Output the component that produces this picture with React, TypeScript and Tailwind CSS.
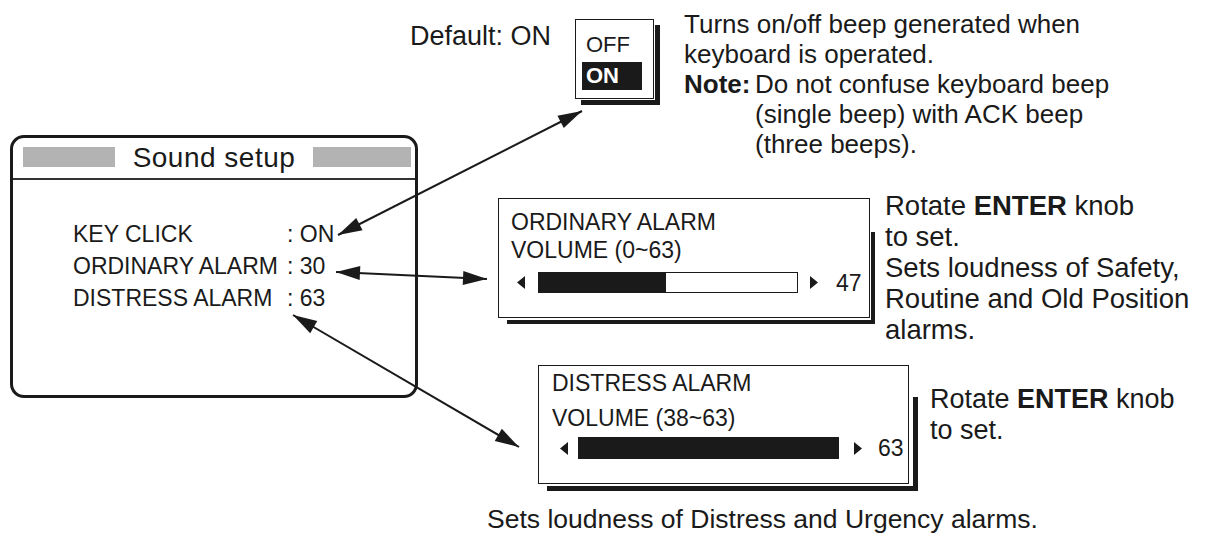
import React from 'react';

type Pt = [number, number];

const INK = '#1a1a1a';

// arrowhead polygon with its tip on `tip`, pointing away from `from`
const headPoints = (tip: Pt, from: Pt) => {
  const dx = from[0] - tip[0];
  const dy = from[1] - tip[1];
  const len = Math.hypot(dx, dy);
  const ux = dx / len;
  const uy = dy / len;
  const L = 24;
  const W = 7;
  const bx = tip[0] + ux * L;
  const by = tip[1] + uy * L;
  return `${tip[0]},${tip[1]} ${bx - uy * W},${by + ux * W} ${bx + uy * W},${by - ux * W}`;
};

const Arrow = ({ a, b }: { a: Pt; b: Pt }) => (
  <g>
    <line x1={a[0]} y1={a[1]} x2={b[0]} y2={b[1]} stroke={INK} strokeWidth={2} />
    <polygon points={headPoints(a, b)} fill={INK} />
    <polygon points={headPoints(b, a)} fill={INK} />
  </g>
);

const TriLeft = () => (
  <svg width="8" height="13" viewBox="0 0 8 13" className="shrink-0">
    <polygon points="8,0 8,13 0,6.5" fill={INK} />
  </svg>
);

const TriRight = () => (
  <svg width="8" height="13" viewBox="0 0 8 13" className="shrink-0">
    <polygon points="0,0 0,13 8,6.5" fill={INK} />
  </svg>
);

const Bold = ({ children }: { children: React.ReactNode }) => <span className="font-bold">{children}</span>;

const App: React.FC = () => {
  return (
    <div className="relative h-[536px] w-[1205px] overflow-hidden bg-white text-[#1a1a1a] font-['Liberation_Sans',Arial,sans-serif]">
      {/* screen: Sound setup */}
      <div className="absolute left-[10px] top-[135px] h-[263px] w-[408px] rounded-[14px] border-[3px] border-[#1a1a1a]">
        <div className="flex h-[42px] items-start border-b-2 border-[#333] pl-[10px] pr-[4px] pt-[9px]">
          <div className="h-[20px] w-[92px] bg-[#b3b3b3]" />
          <div className="flex-1 text-center text-[28px] leading-[22px] tracking-[0.5px]">Sound setup</div>
          <div className="h-[20px] w-[98px] bg-[#b3b3b3]" />
        </div>
        <div className="grid grid-cols-[214px_auto] pl-[60px] pt-[38px] text-[23px] leading-[32px]">
          <span>KEY CLICK</span>
          <span>: ON</span>
          <span>ORDINARY ALARM</span>
          <span>: 30</span>
          <span>DISTRESS ALARM</span>
          <span>: 63</span>
        </div>
      </div>

      {/* OFF / ON option window */}
      <div className="absolute left-[410px] top-[21px] text-[27px] leading-[30px]">Default: ON</div>
      <div className="absolute left-[575px] top-[19px] h-[80px] w-[79px] border border-[#1a1a1a] bg-white pl-[6px] pt-[13px] shadow-[1px_1px_0_0_#fff,6px_6px_0_0_#1a1a1a]">
        <div className="ml-[4px] text-[22px] leading-[24px]">OFF</div>
        <div className="mt-[5px] h-[28px] w-[60px] bg-[#1a1a1a] pl-[4px] text-[22px] font-bold leading-[28px] text-white">ON</div>
      </div>

      <div className="absolute left-[684px] top-[9px] whitespace-nowrap text-[26px] leading-[30px]">
        <div>Turns on/off beep generated when</div>
        <div>keyboard is operated.</div>
        <div className="flex">
          <span className="w-[71px] shrink-0 font-bold">Note:</span>
          <div>
            <div>Do not confuse keyboard beep</div>
            <div>(single beep) with ACK beep</div>
            <div>(three beeps).</div>
          </div>
        </div>
      </div>

      {/* ORDINARY ALARM volume window */}
      <div className="absolute left-[498px] top-[198px] h-[120px] w-[372px] border border-[#1a1a1a] pl-[12px] pt-[9px] text-[23px] leading-[28px]">
        <div>ORDINARY ALARM</div>
        <div>VOLUME (0~63)</div>
        <div className="ml-[6px] mt-[8px] flex h-[21px] items-center">
          <TriLeft />
          <div className="ml-[13px] h-[21px] w-[260px] border border-[#1a1a1a]">
            <div className="h-full w-[127px] bg-[#1a1a1a]" />
          </div>
          <div className="ml-[12px]"><TriRight /></div>
          <span className="ml-[18px]">47</span>
        </div>
        <div className="absolute -right-[6px] top-[33px] h-[92px] w-[4px] bg-[#1a1a1a]" />
        <div className="absolute -bottom-[7px] left-[8px] h-[4px] w-[368px] bg-[#1a1a1a]" />
      </div>

      <div className="absolute left-[885px] top-[190px] whitespace-nowrap text-[27.5px] leading-[31px]">
        <div>Rotate <Bold>ENTER</Bold> knob</div>
        <div>to set.</div>
        <div>Sets loudness of Safety,</div>
        <div>Routine and Old Position</div>
        <div>alarms.</div>
      </div>

      {/* DISTRESS ALARM volume window */}
      <div className="absolute left-[538px] top-[365px] h-[119px] w-[371px] border border-[#1a1a1a] pl-[13px] pt-[3px] text-[23px] leading-[28px]">
        <div>DISTRESS ALARM</div>
        <div className="mt-[7px]">VOLUME (38~63)</div>
        <div className="ml-[8px] mt-[5px] flex h-[22px] items-center">
          <TriLeft />
          <div className="ml-[10px] h-[22px] w-[261px] border border-[#1a1a1a] bg-[#1a1a1a]" />
          <div className="ml-[15px]"><TriRight /></div>
          <span className="ml-[16px]">63</span>
        </div>
        <div className="absolute -right-[10px] top-[31px] h-[94px] w-[5px] bg-[#1a1a1a]" />
        <div className="absolute -bottom-[8px] left-[8px] h-[5px] w-[370px] bg-[#1a1a1a]" />
      </div>

      <div className="absolute left-[930px] top-[384px] whitespace-nowrap text-[27px] leading-[31px]">
        <div>Rotate <Bold>ENTER</Bold> knob</div>
        <div>to set.</div>
      </div>

      <div className="absolute left-[487px] top-[504px] whitespace-nowrap text-[26.5px] leading-[31px]">
        Sets loudness of Distress and Urgency alarms.
      </div>

      {/* leader arrows */}
      <svg className="pointer-events-none absolute inset-0" width="1205" height="536" viewBox="0 0 1205 536">
        <Arrow a={[338, 235]} b={[582, 111]} />
        <Arrow a={[336, 272]} b={[487, 279]} />
        <Arrow a={[293, 315]} b={[519, 447]} />
      </svg>
    </div>
  );
};

export default App;
